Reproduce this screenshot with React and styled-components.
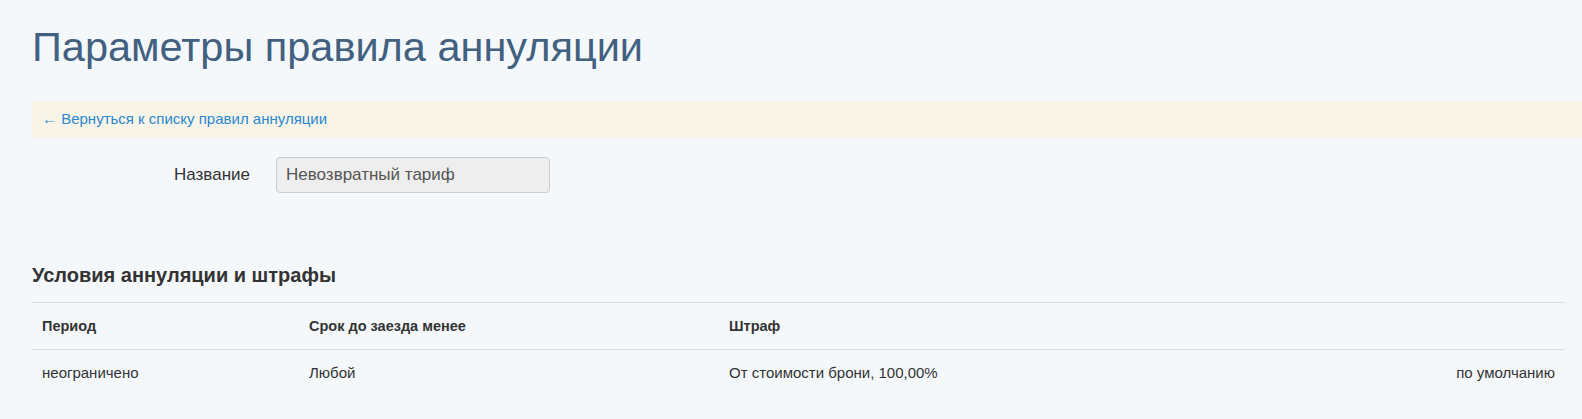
import React from "react";
import styled, { createGlobalStyle } from "styled-components";

const GlobalStyle = createGlobalStyle`
  html, body {
    margin: 0;
    padding: 0;
    background: #f5f8fb;
    font-family: "Liberation Sans", Arial, sans-serif;
    color: #333;
  }
`;

const Page = styled.div`
  padding: 0 0 24px 32px;
`;

const Title = styled.h1`
  margin: 23px 0 31px;
  font-size: 41.5px;
  line-height: 47px;
  font-weight: normal;
  color: #42607f;
`;

const BackBar = styled.div`
  background: #f8f5e8;
  padding: 8px 10px 9px;
  font-size: 15px;
  line-height: 20px;
`;

const BackLink = styled.a`
  color: #2a87d0;
  text-decoration: none;
`;

const FormRow = styled.div`
  display: grid;
  grid-template-columns: 218px 274px;
  column-gap: 26px;
  align-items: center;
  margin-top: 19px;
`;

const Label = styled.label`
  text-align: right;
  font-size: 17px;
  color: #333;
`;

const Input = styled.input`
  box-sizing: border-box;
  height: 36px;
  width: 100%;
  padding: 0 9px;
  font-family: inherit;
  font-size: 17px;
  color: #555;
  background: #eee;
  border: 1px solid #ccc;
  border-radius: 4px;
`;

const Section = styled.h3`
  margin: 72px 0 0;
  font-size: 20px;
  line-height: 20px;
  font-weight: bold;
  color: #333;
`;

const Table = styled.table`
  margin-top: 17px;
  width: calc(100% - 17px);
  border-collapse: collapse;
  font-size: 15px;
  line-height: 20px;
`;

const Th = styled.th`
  text-align: left;
  font-size: 14.5px;
  font-weight: bold;
  padding: 13px 10px;
  border-top: 1px solid #ddd;
  border-bottom: 1px solid #ddd;
  width: ${(p) => p.$w || "auto"};
`;

const Td = styled.td`
  padding: 13px 10px;
  text-align: ${(p) => (p.$right ? "right" : "left")};
`;

export default function App() {
  return (
    <Page>
      <GlobalStyle />
      <Title>Параметры правила аннуляции</Title>
      <BackBar>
        <BackLink href="#">← Вернуться к списку правил аннуляции</BackLink>
      </BackBar>
      <FormRow>
        <Label>Название</Label>
        <Input readOnly value="Невозвратный тариф" />
      </FormRow>
      <Section>Условия аннуляции и штрафы</Section>
      <Table>
        <thead>
          <tr>
            <Th $w="247px">Период</Th>
            <Th $w="400px">Срок до заезда менее</Th>
            <Th>Штраф</Th>
            <Th />
          </tr>
        </thead>
        <tbody>
          <tr>
            <Td>неограничено</Td>
            <Td>Любой</Td>
            <Td>От стоимости брони, 100,00%</Td>
            <Td $right>по умолчанию</Td>
          </tr>
        </tbody>
      </Table>
    </Page>
  );
}
